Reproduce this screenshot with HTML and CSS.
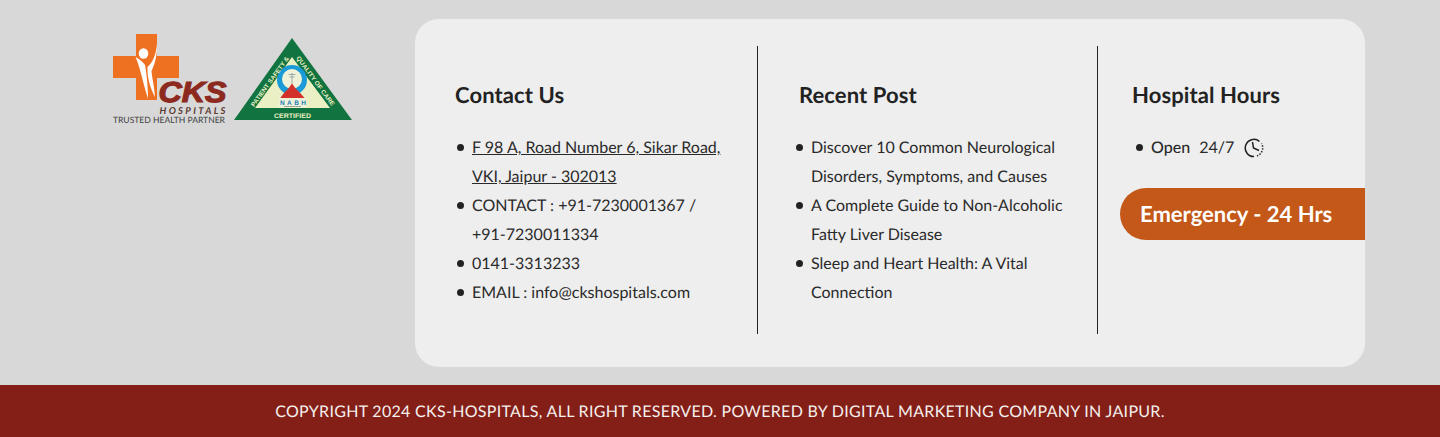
FILE: index.html
```html
<!DOCTYPE html>
<html lang="en">

<head>
    <meta charset="UTF-8">
    <meta name="viewport" content="width=device-width, initial-scale=1.0">
    <title>CKS Hospitals</title>
    <link rel="stylesheet" href="styles.css">
</head>

<body>
    <div class="footer-top">
        <div class="logos">
            <svg class="logo-cks" width="116" height="94" viewBox="0 0 116 94">
                <path d="M24 0H45V22H67V44H45V66H24V44H1V22H24Z" fill="#ee7121" />
                <ellipse cx="31.5" cy="19.5" rx="4.8" ry="5.2" fill="#fff" />
                <path d="M23.5 23C28 33 30 45 36 65C36 50 34 36 33 31C30 27 27 25 23.5 23Z" fill="#fff" />
                <path d="M45 10C44 22 40 29 35.5 33C35 45 39 55 43 63C42 50 40 44 39.5 37C43 30 45.5 20 45 10Z" fill="#fff" />
                <text x="46.5" y="68" textLength="68" lengthAdjust="spacingAndGlyphs" class="cks-word">CKS</text>
                <text x="47.5" y="79.5" textLength="66" class="cks-sub">HOSPITALS</text>
                <text x="1" y="89" textLength="112" class="cks-tag">TRUSTED HEALTH PARTNER</text>
            </svg>
            <svg class="logo-nabh" width="120" height="86" viewBox="0 0 120 86">
                <path d="M60 0L120 82H2Z" fill="#11733f" />
                <path d="M60 19L98 70H23Z" fill="#eaf0c4" />
                <circle cx="60" cy="42" r="15" fill="#1a9ad6" />
                <circle cx="60" cy="41" r="10" fill="#eef2d8" />
                <path d="M60 35V45M56.5 36.5H63.5M57.5 39H62.5" stroke="#8b99a4" stroke-width="0.8" fill="none" />
                <path d="M60 45C62 50 68 54 73 60.5H48C52 54 58 50 60 45Z" fill="#d2322b" />
                <rect x="47" y="60" width="27" height="10" fill="#eef2d8" />
                <text x="48" y="66.5" textLength="26" class="nabh-name">NABH</text>
                <rect x="52" y="68" width="17" height="1" fill="#a0a493" />
                <text x="42" y="79.5" textLength="37" lengthAdjust="spacingAndGlyphs" class="nabh-cert">CERTIFIED</text>
                <text class="nabh-arc" transform="translate(22 69) rotate(-54)" textLength="60" lengthAdjust="spacingAndGlyphs">PATIENT SAFETY &amp;</text>
                <text class="nabh-arc" transform="translate(64 20) rotate(53.7)" textLength="60" lengthAdjust="spacingAndGlyphs">QUALITY OF CARE</text>
            </svg>
        </div>

        <div class="info-card">
            <div class="info-col col-contact">
                <h3>Contact Us</h3>
                <ul>
                    <li><a href="#">F 98 A, Road Number 6, Sikar Road, VKI, Jaipur - 302013</a></li>
                    <li>CONTACT : +91-7230001367 / +91-7230011334</li>
                    <li>0141-3313233</li>
                    <li>EMAIL : info@ckshospitals.com</li>
                </ul>
            </div>
            <div class="info-col col-posts">
                <h3>Recent Post</h3>
                <ul>
                    <li>Discover 10 Common Neurological Disorders, Symptoms, and Causes</li>
                    <li>A Complete Guide to Non-Alcoholic Fatty Liver Disease</li>
                    <li>Sleep and Heart Health: A Vital Connection</li>
                </ul>
            </div>
            <div class="info-col col-hours">
                <h3>Hospital Hours</h3>
                <ul>
                    <li class="open-row">
                        <span class="open-label">Open</span>
                        <span>24/7</span>
                        <svg width="20" height="20" viewBox="0 0 20 20" fill="none" stroke="#222" stroke-width="1.5">
                            <path d="M15.5 3.5A8.6 8.6 0 1 0 10 18.6" />
                            <path d="M13 18A8.6 8.6 0 0 0 17.5 5.5" stroke-dasharray="1.4 1.5" />
                            <path d="M8.5 4L9.5 10L15 12.5" />
                        </svg>
                    </li>
                </ul>
                <div class="emergency">Emergency - 24 Hrs</div>
            </div>
        </div>
    </div>

    <div class="copyright">COPYRIGHT 2024 CKS-HOSPITALS, ALL RIGHT RESERVED. POWERED BY DIGITAL MARKETING COMPANY IN JAIPUR.</div>
</body>

</html>
```

FILE: styles.css
```css
body {
    font-family: Lato, "Open Sans", sans-serif;
    background-color: #d8d8d8;
    color: #222;
    margin: 0;
    text-rendering: geometricPrecision;
}

.footer-top {
    display: flex;
    height: 385px;
    padding: 19px 75px 18px 0;
    box-sizing: border-box;
}

.logos {
    width: 415px;
    flex-shrink: 0;
    display: flex;
    align-items: flex-start;
    padding: 15px 0 0 112px;
    box-sizing: border-box;
}

.logos svg {
    display: block;
    flex-shrink: 0;
}

.logo-nabh {
    margin: 4px 0 0 4px;
}

.cks-word {
    font-family: "Liberation Sans", sans-serif;
    font-size: 29px;
    font-weight: 700;
    font-style: italic;
    fill: #8c2a20;
    stroke: #8c2a20;
    stroke-width: 1.2px;
}

.cks-sub {
    font-size: 9.5px;
    font-weight: 700;
    font-style: italic;
    fill: #5a3a32;
}

.cks-tag {
    font-size: 8.6px;
    fill: #444;
}

.nabh-name {
    font-family: "Liberation Sans", sans-serif;
    font-size: 6.5px;
    font-weight: 700;
    fill: #1a7fb8;
}

.nabh-cert {
    font-family: "Liberation Sans", sans-serif;
    font-size: 6.6px;
    font-weight: 700;
    fill: #eaf0c4;
}

.nabh-arc {
    font-family: "Liberation Sans", sans-serif;
    font-size: 6.2px;
    font-weight: 700;
    fill: #eaf0c4;
}

.info-card {
    flex: 1;
    display: flex;
    background-color: #eeeeee;
    border-radius: 24px;
    padding: 27px 0 33px;
}

.info-col {
    box-sizing: border-box;
    padding-top: 36px;
}

.col-contact {
    width: 343px;
    padding-left: 40px;
    padding-right: 30px;
    border-right: 1px solid #222;
}

.col-posts {
    width: 340px;
    padding-left: 41px;
    padding-right: 30px;
    border-right: 1px solid #222;
}

.col-hours {
    flex: 1;
    padding-left: 34px;
}

h3 {
    font-size: 22px;
    line-height: 26px;
    font-weight: 700;
    letter-spacing: 0.1px;
    margin: 0 0 25px;
}

ul {
    margin: 0;
    padding-left: 17px;
    font-size: 16px;
    line-height: 29px;
    list-style: none;
    color: #2a2a2a;
}

.col-posts ul {
    padding-left: 12px;
}

.col-hours ul {
    padding-left: 19px;
}

li::before {
    content: "";
    display: inline-block;
    width: 7px;
    height: 7px;
    margin: 0 8px 2px -15px;
    border-radius: 50%;
    background-color: #222;
    vertical-align: middle;
}

a {
    color: inherit;
}

.open-row {
    display: flex;
    align-items: center;
    height: 29px;
    gap: 9px;
}

.open-row::before {
    margin: 0 -1px 0 -15px;
}

.open-row svg {
    margin-left: 1px;
}

.open-label {
    font-weight: 500;
}

.emergency {
    margin: 26px 0 0 -12px;
    height: 52px;
    line-height: 52px;
    padding-left: 20px;
    background-color: #c35818;
    color: #fff;
    font-size: 22px;
    font-weight: 700;
    border-radius: 26px 0 0 26px;
}

.copyright {
    height: 52px;
    line-height: 54px;
    background-color: #841f17;
    color: #f4f0ee;
    font-size: 16px;
    letter-spacing: 0.3px;
    text-align: center;
}
```
